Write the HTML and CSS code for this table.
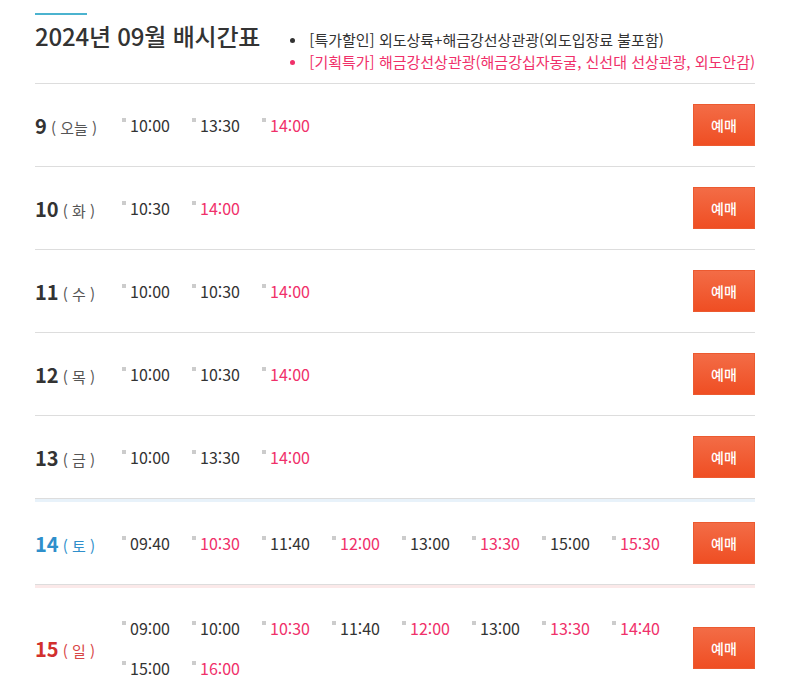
FILE: index.html
```html
<!DOCTYPE html>
<html lang="ko">
<head>
<meta charset="utf-8">
<title>2024년 09월 배시간표</title>
<link rel="stylesheet" href="styles.css">
</head>
<body>
<div class="wrap">
  <header class="head">
    <div class="bar"></div>
    <div class="head-row">
      <h1 class="title">2024년 09월 배시간표</h1>
      <ul class="notes">
        <li class="note">[특가할인] 외도상륙+해금강선상관광(외도입장료 불포함)</li>
        <li class="note note-hot">[기획특가] 해금강선상관광(해금강십자동굴, 신선대 선상관광, 외도안감)</li>
      </ul>
    </div>
  </header>

  <div class="row">
    <div class="day"><span class="num">9</span> <span class="dow">( 오늘 )</span></div>
    <ul class="times">
      <li class="time"><i class="mk"></i><span>10:00</span></li>
      <li class="time"><i class="mk"></i><span>13:30</span></li>
      <li class="time hot"><i class="mk"></i><span>14:00</span></li>
    </ul>
    <a class="btn">예매</a>
  </div>

  <div class="row">
    <div class="day"><span class="num">10</span> <span class="dow">( 화 )</span></div>
    <ul class="times">
      <li class="time"><i class="mk"></i><span>10:30</span></li>
      <li class="time hot"><i class="mk"></i><span>14:00</span></li>
    </ul>
    <a class="btn">예매</a>
  </div>

  <div class="row">
    <div class="day"><span class="num">11</span> <span class="dow">( 수 )</span></div>
    <ul class="times">
      <li class="time"><i class="mk"></i><span>10:00</span></li>
      <li class="time"><i class="mk"></i><span>10:30</span></li>
      <li class="time hot"><i class="mk"></i><span>14:00</span></li>
    </ul>
    <a class="btn">예매</a>
  </div>

  <div class="row">
    <div class="day"><span class="num">12</span> <span class="dow">( 목 )</span></div>
    <ul class="times">
      <li class="time"><i class="mk"></i><span>10:00</span></li>
      <li class="time"><i class="mk"></i><span>10:30</span></li>
      <li class="time hot"><i class="mk"></i><span>14:00</span></li>
    </ul>
    <a class="btn">예매</a>
  </div>

  <div class="row">
    <div class="day"><span class="num">13</span> <span class="dow">( 금 )</span></div>
    <ul class="times">
      <li class="time"><i class="mk"></i><span>10:00</span></li>
      <li class="time"><i class="mk"></i><span>13:30</span></li>
      <li class="time hot"><i class="mk"></i><span>14:00</span></li>
    </ul>
    <a class="btn">예매</a>
  </div>

  <div class="row sat">
    <div class="day"><span class="num">14</span> <span class="dow">( 토 )</span></div>
    <ul class="times">
      <li class="time"><i class="mk"></i><span>09:40</span></li>
      <li class="time hot"><i class="mk"></i><span>10:30</span></li>
      <li class="time"><i class="mk"></i><span>11:40</span></li>
      <li class="time hot"><i class="mk"></i><span>12:00</span></li>
      <li class="time"><i class="mk"></i><span>13:00</span></li>
      <li class="time hot"><i class="mk"></i><span>13:30</span></li>
      <li class="time"><i class="mk"></i><span>15:00</span></li>
      <li class="time hot"><i class="mk"></i><span>15:30</span></li>
    </ul>
    <a class="btn">예매</a>
  </div>

  <div class="row sun">
    <div class="day"><span class="num">15</span> <span class="dow">( 일 )</span></div>
    <ul class="times">
      <li class="time"><i class="mk"></i><span>09:00</span></li>
      <li class="time"><i class="mk"></i><span>10:00</span></li>
      <li class="time hot"><i class="mk"></i><span>10:30</span></li>
      <li class="time"><i class="mk"></i><span>11:40</span></li>
      <li class="time hot"><i class="mk"></i><span>12:00</span></li>
      <li class="time"><i class="mk"></i><span>13:00</span></li>
      <li class="time hot"><i class="mk"></i><span>13:30</span></li>
      <li class="time hot"><i class="mk"></i><span>14:40</span></li>
      <li class="time"><i class="mk"></i><span>15:00</span></li>
      <li class="time hot"><i class="mk"></i><span>16:00</span></li>
    </ul>
    <a class="btn">예매</a>
  </div>
</div>
</body>
</html>
```

FILE: styles.css
```css
* { box-sizing: border-box; }
html, body {
  margin: 0;
  padding: 0;
  background: #fff;
}
body {
  font-family: "Noto Sans CJK KR", "Noto Sans", sans-serif;
  color: #333;
}
.wrap {
  width: 720px;
  margin: 0 0 0 35px;
}
.head {
  padding-top: 13px;
  padding-bottom: 10px;
  border-bottom: 1px solid #dddddd;
}
.bar {
  width: 52px;
  height: 2px;
  background: #4bb3cf;
}
.head-row {
  display: flex;
  justify-content: space-between;
  align-items: flex-start;
  margin-top: 6px;
}
.title {
  margin: 0;
  font-size: 24px;
  line-height: 30px;
  font-weight: 500;
  color: #333;
  letter-spacing: -0.2px;
}
.notes {
  list-style: none;
  margin: 8px 0 0;
  padding: 0;
}
.note {
  display: flex;
  align-items: center;
  font-size: 15px;
  line-height: 22px;
  color: #333;
  white-space: nowrap;
}
.note::before {
  content: "";
  width: 5px;
  height: 5px;
  border-radius: 50%;
  background: currentColor;
  margin-right: 14px;
  flex: none;
}
.note-hot { color: #f0306a; }

.row {
  display: flex;
  align-items: center;
  padding: 20px 0;
  border-bottom: 1px solid #dddddd;
}
.row.sat { border-top: 3px solid #e8f2fa; }
.row.sun { border-top: 3px solid #fbe9e9; }
.day {
  width: 87px;
  flex: none;
  font-size: 15px;
  white-space: nowrap;
}
.num {
  font-size: 20px;
  font-weight: 700;
  color: #333;
}
.dow {
  color: #555;
}
.sat .num, .sat .dow { color: #2f8fcb; }
.sun .num { color: #d2302e; }
.sun .dow { color: #d84646; }

.times {
  list-style: none;
  margin: 0;
  padding: 0;
  width: 566px;
  display: flex;
  flex-wrap: wrap;
}
.time {
  width: 70px;
  display: flex;
  align-items: flex-start;
  font-size: 16px;
  line-height: 40px;
  color: #333;
}
.time.hot { color: #f0306a; }
.mk {
  width: 4px;
  height: 4px;
  background: #cccccc;
  margin-top: 13px;
  margin-right: 4px;
  flex: none;
}
.btn {
  margin-left: auto;
  width: 62px;
  height: 42px;
  display: flex;
  align-items: center;
  justify-content: center;
  background: linear-gradient(#f36c46, #ef4e23);
  border: 1px solid #ec5a30;
  color: #fff;
  font-size: 14px;
  font-weight: 500;
  flex: none;
}
```
